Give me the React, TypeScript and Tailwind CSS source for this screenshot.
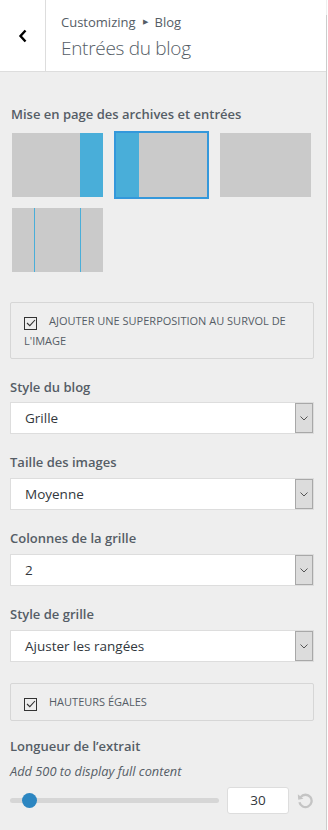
import React from 'react';

const font = { fontFamily: '"Open Sans", "Noto Sans", sans-serif' };

function Label({ children }: { children: React.ReactNode }) {
  return <div className="text-[13px] font-semibold leading-5 text-[#555d66]">{children}</div>;
}

function Select({ value }: { value: string }) {
  return (
    <div className="flex h-[32px] w-full border border-[#ddd] bg-white">
      <div className="flex flex-1 items-center pl-[14px] text-[13.5px] text-[#32373c]">{value}</div>
      <div className="flex w-[18px] items-center justify-center border border-[#a8a8a8] bg-[#dcdcdc]">
        <svg width="8" height="5" viewBox="0 0 8 5" fill="none">
          <path d="M0.5 0.5 L4 4 L7.5 0.5" stroke="#555" strokeWidth="1" />
        </svg>
      </div>
    </div>
  );
}

function CheckBox() {
  return (
    <span className="mr-[12px] inline-flex h-[13px] w-[13px] shrink-0 items-center justify-center border border-[#333] bg-[#eee] align-[-2px]">
      <svg width="10" height="8" viewBox="0 0 10 8" fill="none">
        <path d="M1 4 L3.8 6.6 L9 1" stroke="#333" strokeWidth="1.1" />
      </svg>
    </span>
  );
}

function LayoutThumb({ kind, selected }: { kind: 'right' | 'left' | 'full' | 'both'; selected?: boolean }) {
  return (
    <div className={selected ? 'm-[-2px] border-2 border-[#3498db]' : ''}>
      <div className="flex h-[64px] w-[91px] bg-[#cacaca]">
        {kind === 'right' && <div className="ml-auto h-full w-[23px] bg-[#49aed9]" />}
        {kind === 'left' && <div className="h-full w-[23px] bg-[#49aed9]" />}
        {kind === 'both' && (
          <>
            <div className="ml-[22px] h-full w-px bg-[#49aed9]" />
            <div className="ml-[45px] h-full w-px bg-[#49aed9]" />
          </>
        )}
      </div>
    </div>
  );
}

export default function App() {
  return (
    <div className="flex h-[830px] w-[328px] overflow-hidden bg-white" style={font}>
      <div className="flex w-[326px] shrink-0 flex-col bg-[#eeeeee]">
        {/* Header */}
        <div className="flex h-[72px] shrink-0 border-b border-[#ddd] bg-white">
          <div className="flex w-[46px] items-center justify-center border-r border-[#ddd]">
            <svg width="10" height="14" viewBox="0 0 10 14" fill="none">
              <path d="M7.5 1.5 L2.5 7 L7.5 12.5" stroke="#000" strokeWidth="2.4" />
            </svg>
          </div>
          <div className="flex flex-col pl-[15px] pt-[12px]">
            <div className="flex items-center text-[13px] leading-5 text-[#555d66]">
              Customizing
              <span className="mx-[7px] text-[7px]">▶</span>
              Blog
            </div>
            <div className="mt-[4px] text-[19px] font-light leading-6 tracking-[-0.3px] text-[#555d66]">
              Entrées du blog
            </div>
          </div>
        </div>

        {/* Body */}
        <div className="flex shrink-0 flex-col pl-[10px] pr-[12px] pt-[32px]">
          <div className="pl-px">
            <Label>Mise en page des archives et entrées</Label>
          </div>
          <div className="mt-[9px] grid grid-cols-[91px_91px_91px] gap-x-[13px] gap-y-[11px] pl-[2px]">
            <LayoutThumb kind="right" />
            <LayoutThumb kind="left" selected />
            <LayoutThumb kind="full" />
            <LayoutThumb kind="both" />
          </div>

          <div className="mt-[30px] rounded-[2px] border border-[#d6d6d6] px-[9px] pb-[7px] pt-[8px]">
            <div className="pl-[4px] text-[11px] uppercase leading-5 text-[#555d66]">
              <CheckBox />
              Ajouter une superposition au survol de l'image
            </div>
          </div>

          <div className="mt-[18px]">
            <Label>Style du blog</Label>
          </div>
          <div className="mt-[5px]">
            <Select value="Grille" />
          </div>

          <div className="mt-[18px]">
            <Label>Taille des images</Label>
          </div>
          <div className="mt-[6px]">
            <Select value="Moyenne" />
          </div>

          <div className="mt-[18px]">
            <Label>Colonnes de la grille</Label>
          </div>
          <div className="mt-[6px]">
            <Select value="2" />
          </div>

          <div className="mt-[18px]">
            <Label>Style de grille</Label>
          </div>
          <div className="mt-[6px]">
            <Select value="Ajuster les rangées" />
          </div>

          <div className="mt-[21px] rounded-[2px] border border-[#d6d6d6] px-[9px] py-[8px]">
            <div className="pl-[4px] text-[11px] uppercase leading-5 text-[#555d66]">
              <CheckBox />
              Hauteurs égales
            </div>
          </div>

          <div className="mt-[15px]">
            <Label>Longueur de l’extrait</Label>
          </div>
          <div className="mt-[5px] text-[12.8px] italic leading-5 text-[#555d66]">Add 500 to display full content</div>

          <div className="mt-[6px] flex h-[27px] items-center">
            <div className="relative h-[5px] w-[209px] rounded-full bg-[#d6d6d6]">
              <div className="absolute left-[12px] top-[-5px] h-[15px] w-[15px] rounded-full bg-[#2c86c1]" />
            </div>
            <div className="ml-[8px] flex h-[27px] w-[62px] items-center justify-center rounded-[3px] border border-[#ddd] bg-white text-[13.5px] text-[#32373c]">
              30
            </div>
            <svg className="ml-[8px]" width="17" height="17" viewBox="0 0 16 16" fill="none">
              <path d="M3.4 4.8 A5.8 5.8 0 1 1 2.3 9.6" stroke="#c4c4c4" strokeWidth="2.2" />
              <path d="M0.8 2.2 L1.1 7.4 L6 6.3 Z" fill="#c4c4c4" />
            </svg>
          </div>
        </div>
      </div>
      <div className="flex w-[2px] flex-col">
        <div className="h-[15px] w-px bg-[#eee]" />
        <div className="w-px flex-1 bg-[#ccc]" />
      </div>
    </div>
  );
}
